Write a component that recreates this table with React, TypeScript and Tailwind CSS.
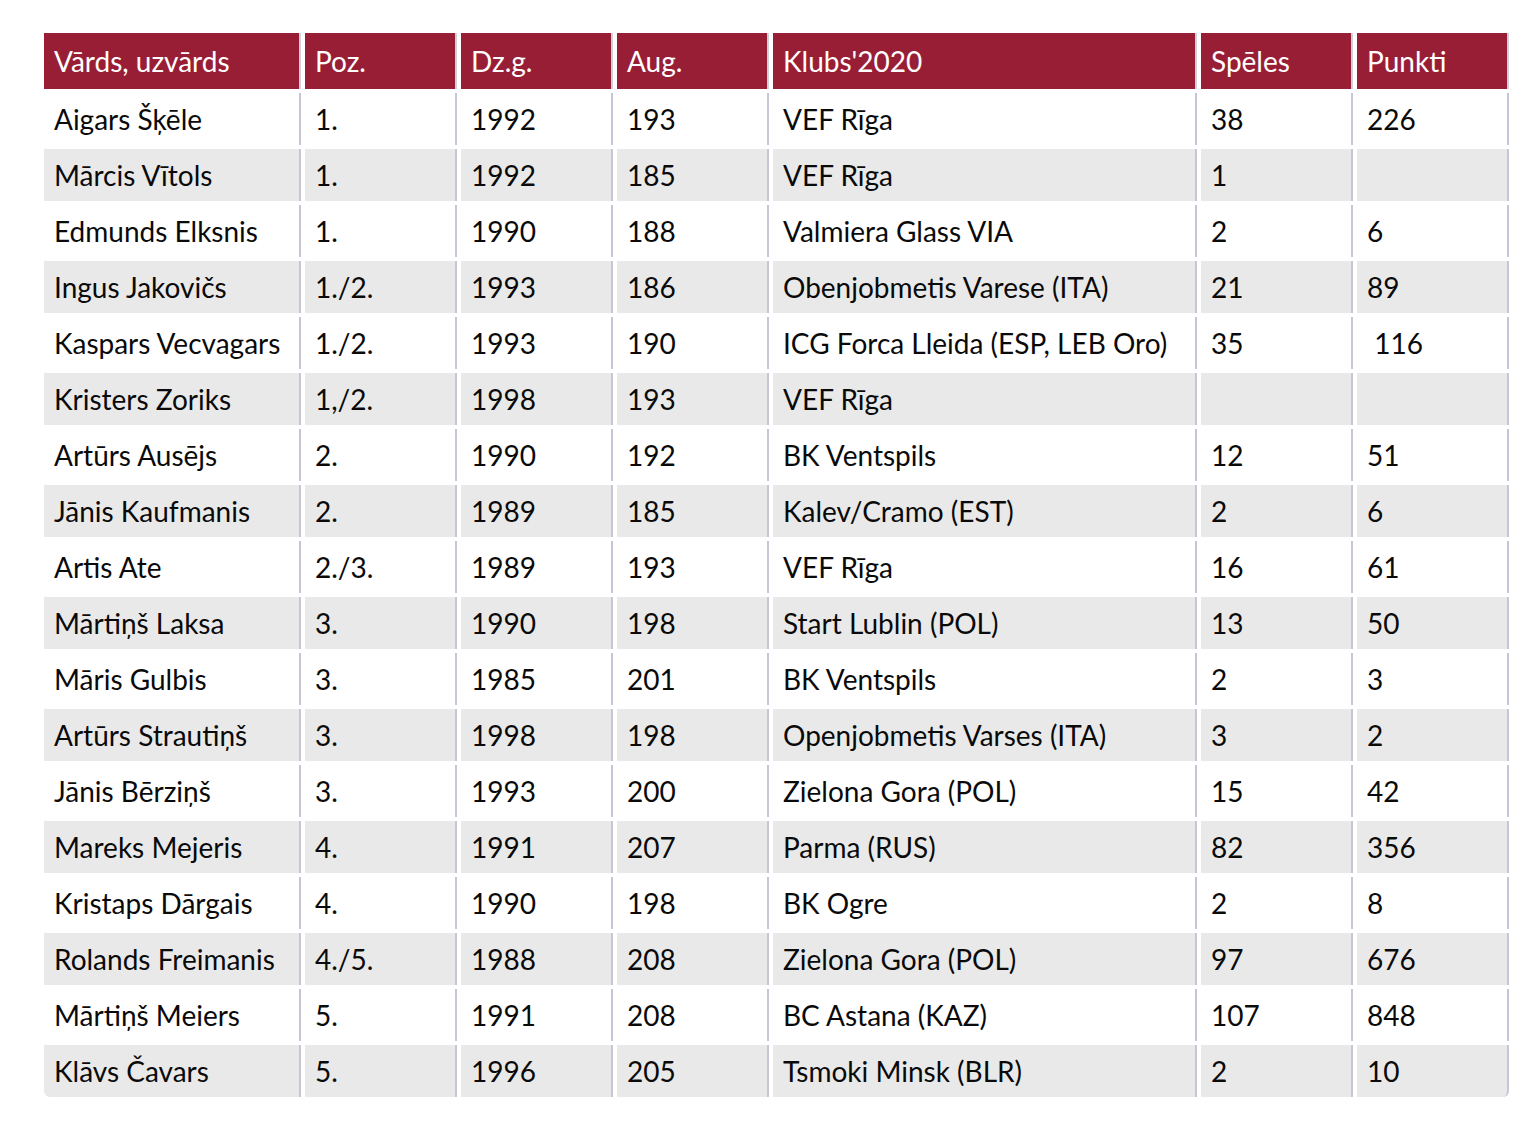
import React from "react";

const headers = ["Vārds, uzvārds", "Poz.", "Dz.g.", "Aug.", "Klubs'2020", "Spēles", "Punkti"];
const widths = ["w-[257px]", "w-[152px]", "w-[152px]", "w-[152px]", "w-[424px]", "w-[152px]", "w-[152px]"];

const rows: string[][] = [
  ["Aigars Šķēle", "1.", "1992", "193", "VEF Rīga", "38", "226"],
  ["Mārcis Vītols", "1.", "1992", "185", "VEF Rīga", "1", ""],
  ["Edmunds Elksnis", "1.", "1990", "188", "Valmiera Glass VIA", "2", "6"],
  ["Ingus Jakovičs", "1./2.", "1993", "186", "Obenjobmetis Varese (ITA)", "21", "89"],
  ["Kaspars Vecvagars", "1./2.", "1993", "190", "ICG Forca Lleida (ESP, LEB Oro)", "35", "\u00a0116"],
  ["Kristers Zoriks", "1,/2.", "1998", "193", "VEF Rīga", "", ""],
  ["Artūrs Ausējs", "2.", "1990", "192", "BK Ventspils", "12", "51"],
  ["Jānis Kaufmanis", "2.", "1989", "185", "Kalev/Cramo (EST)", "2", "6"],
  ["Artis Ate", "2./3.", "1989", "193", "VEF Rīga", "16", "61"],
  ["Mārtiņš Laksa", "3.", "1990", "198", "Start Lublin (POL)", "13", "50"],
  ["Māris Gulbis", "3.", "1985", "201", "BK Ventspils", "2", "3"],
  ["Artūrs Strautiņš", "3.", "1998", "198", "Openjobmetis Varses (ITA)", "3", "2"],
  ["Jānis Bērziņš", "3.", "1993", "200", "Zielona Gora (POL)", "15", "42"],
  ["Mareks Mejeris", "4.", "1991", "207", "Parma (RUS)", "82", "356"],
  ["Kristaps Dārgais", "4.", "1990", "198", "BK Ogre", "2", "8"],
  ["Rolands Freimanis", "4./5.", "1988", "208", "Zielona Gora (POL)", "97", "676"],
  ["Mārtiņš Meiers", "5.", "1991", "208", "BC Astana (KAZ)", "107", "848"],
  ["Klāvs Čavars", "5.", "1996", "205", "Tsmoki Minsk (BLR)", "2", "10"],
];

export default function App() {
  return (
    <div className="min-h-[1121px] w-[1531px] bg-white pt-[29px] pl-[40px] font-['Lato','Noto_Sans',sans-serif]">
      <table className="table-fixed border-separate border-spacing-1 w-[1473px] text-[28px] leading-none">
        <colgroup>
          {widths.map((w, i) => (
            <col key={i} className={w} />
          ))}
        </colgroup>
        <thead>
          <tr>
            {headers.map((h, i) => (
              <th
                key={i}
                className="h-[56px] bg-[#981e36] text-white font-normal text-left pl-[10px] border-r-2 border-[#d2d0da] align-middle whitespace-nowrap"
              >
                {h}
              </th>
            ))}
          </tr>
        </thead>
        <tbody>
          {rows.map((r, ri) => {
            const gray = ri % 2 === 1;
            const last = ri === rows.length - 1;
            return (
              <tr key={ri}>
                {r.map((c, ci) => (
                  <td
                    key={ci}
                    className={`h-[52px] pl-[10px] text-[#0a0a0a] border-r-2 border-[#c7c6d6] align-middle whitespace-nowrap ${
                      gray ? "bg-[#e9e9e9]" : "bg-white"
                    } ${last && ci === 0 ? "rounded-bl-[6px]" : ""} ${
                      last && ci === r.length - 1 ? "rounded-br-[6px]" : ""
                    }`}
                  >
                    {c}
                  </td>
                ))}
              </tr>
            );
          })}
        </tbody>
      </table>
    </div>
  );
}
